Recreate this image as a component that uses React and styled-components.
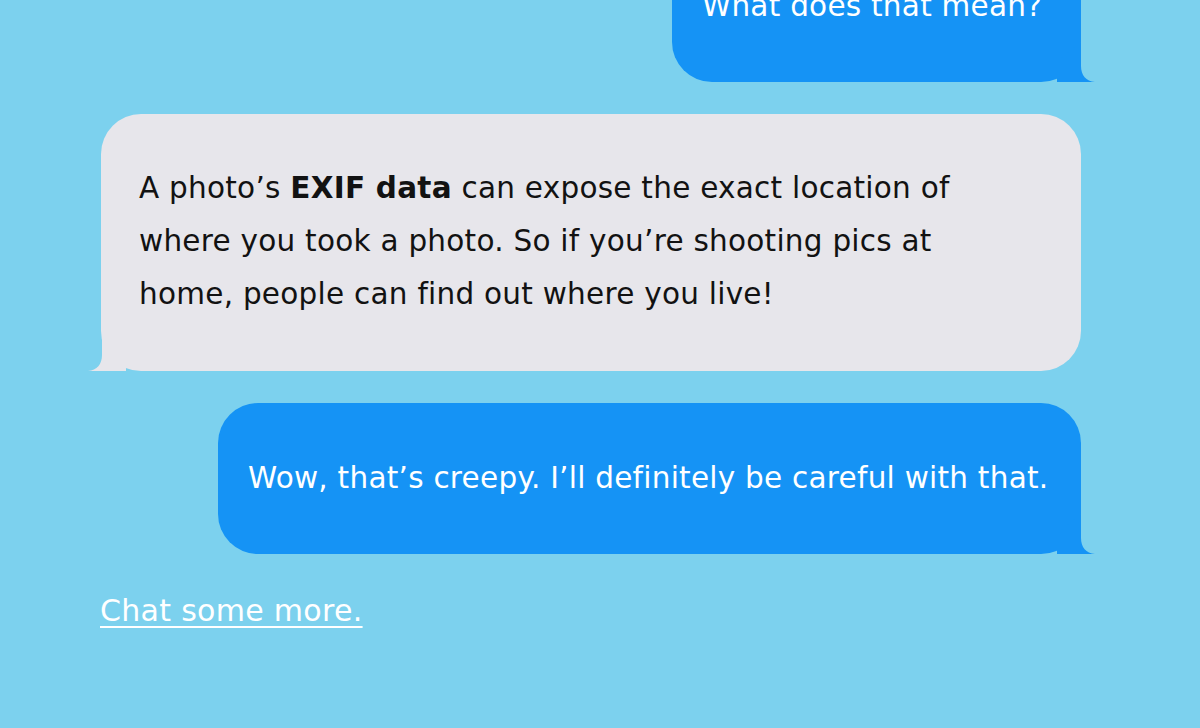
import React from "react";
import styled, { createGlobalStyle } from "styled-components";

const GlobalStyle = createGlobalStyle`
  html, body {
    margin: 0;
    padding: 0;
    background: #7cd1ee;
    overflow: hidden;
  }
  body {
    font-family: "DejaVu Sans", "Liberation Sans", sans-serif;
  }
`;

const Page = styled.div`
  width: 1200px;
  height: 728px;
  background: #7cd1ee;
  overflow: hidden;
`;

const Thread = styled.div`
  width: 980px;
  margin: -69px 0 0 101px;
  display: flex;
  flex-direction: column;
  gap: 32px;
`;

const Bubble = styled.div`
  position: relative;
  box-sizing: border-box;
  width: ${(p) => p.width}px;
  align-self: ${(p) => (p.mine ? "flex-end" : "flex-start")};
  padding: 48px 28px ${(p) => (p.mine ? 49 : 50)}px ${(p) => (p.mine ? 30 : 38)}px;
  border-radius: 40px;
  background: ${(p) => (p.mine ? "#1593f5" : "#e7e6eb")};
  color: ${(p) => (p.mine ? "#ffffff" : "#121212")};
  font-size: 29.5px;
  line-height: ${(p) => (p.mine ? 54 : 53)}px;
  letter-spacing: 0.25px;
  white-space: nowrap;
  b {
    font-weight: bold;
  }
`;

const TailSvg = styled.svg`
  position: absolute;
  bottom: 0;
  width: 40px;
  height: 40px;
  ${(p) => (p.mine ? "right: -14px;" : "left: -13px; transform: scaleX(-1);")}
`;

const Tail = ({ mine }) => (
  <TailSvg mine={mine} viewBox="0 0 40 40">
    <path
      d="M2 40 L2 20 L26 0 L26 24 C26 33 31 39.5 40 40 Z"
      fill={mine ? "#1593f5" : "#e7e6eb"}
    />
  </TailSvg>
);

const MoreLink = styled.a`
  display: block;
  margin: 30px 0 0 100px;
  color: #ffffff;
  font-size: 30px;
  line-height: 54px;
  letter-spacing: 0.3px;
  text-decoration: underline;
  text-decoration-thickness: 2px;
  text-underline-offset: 5px;
  cursor: pointer;
`;

export default function App() {
  return (
    <Page>
      <GlobalStyle />
      <Thread>
        <Bubble mine width={409}>
          What does that mean?
          <Tail mine />
        </Bubble>
        <Bubble width={980}>
          A photo’s <b>EXIF data</b> can expose the exact location of
          <br />
          where you took a photo. So if you’re shooting pics at
          <br />
          home, people can find out where you live!
          <Tail />
        </Bubble>
        <Bubble mine width={863}>
          Wow, that’s creepy. I’ll definitely be careful with that.
          <Tail mine />
        </Bubble>
      </Thread>
      <MoreLink>Chat some more.</MoreLink>
    </Page>
  );
}
